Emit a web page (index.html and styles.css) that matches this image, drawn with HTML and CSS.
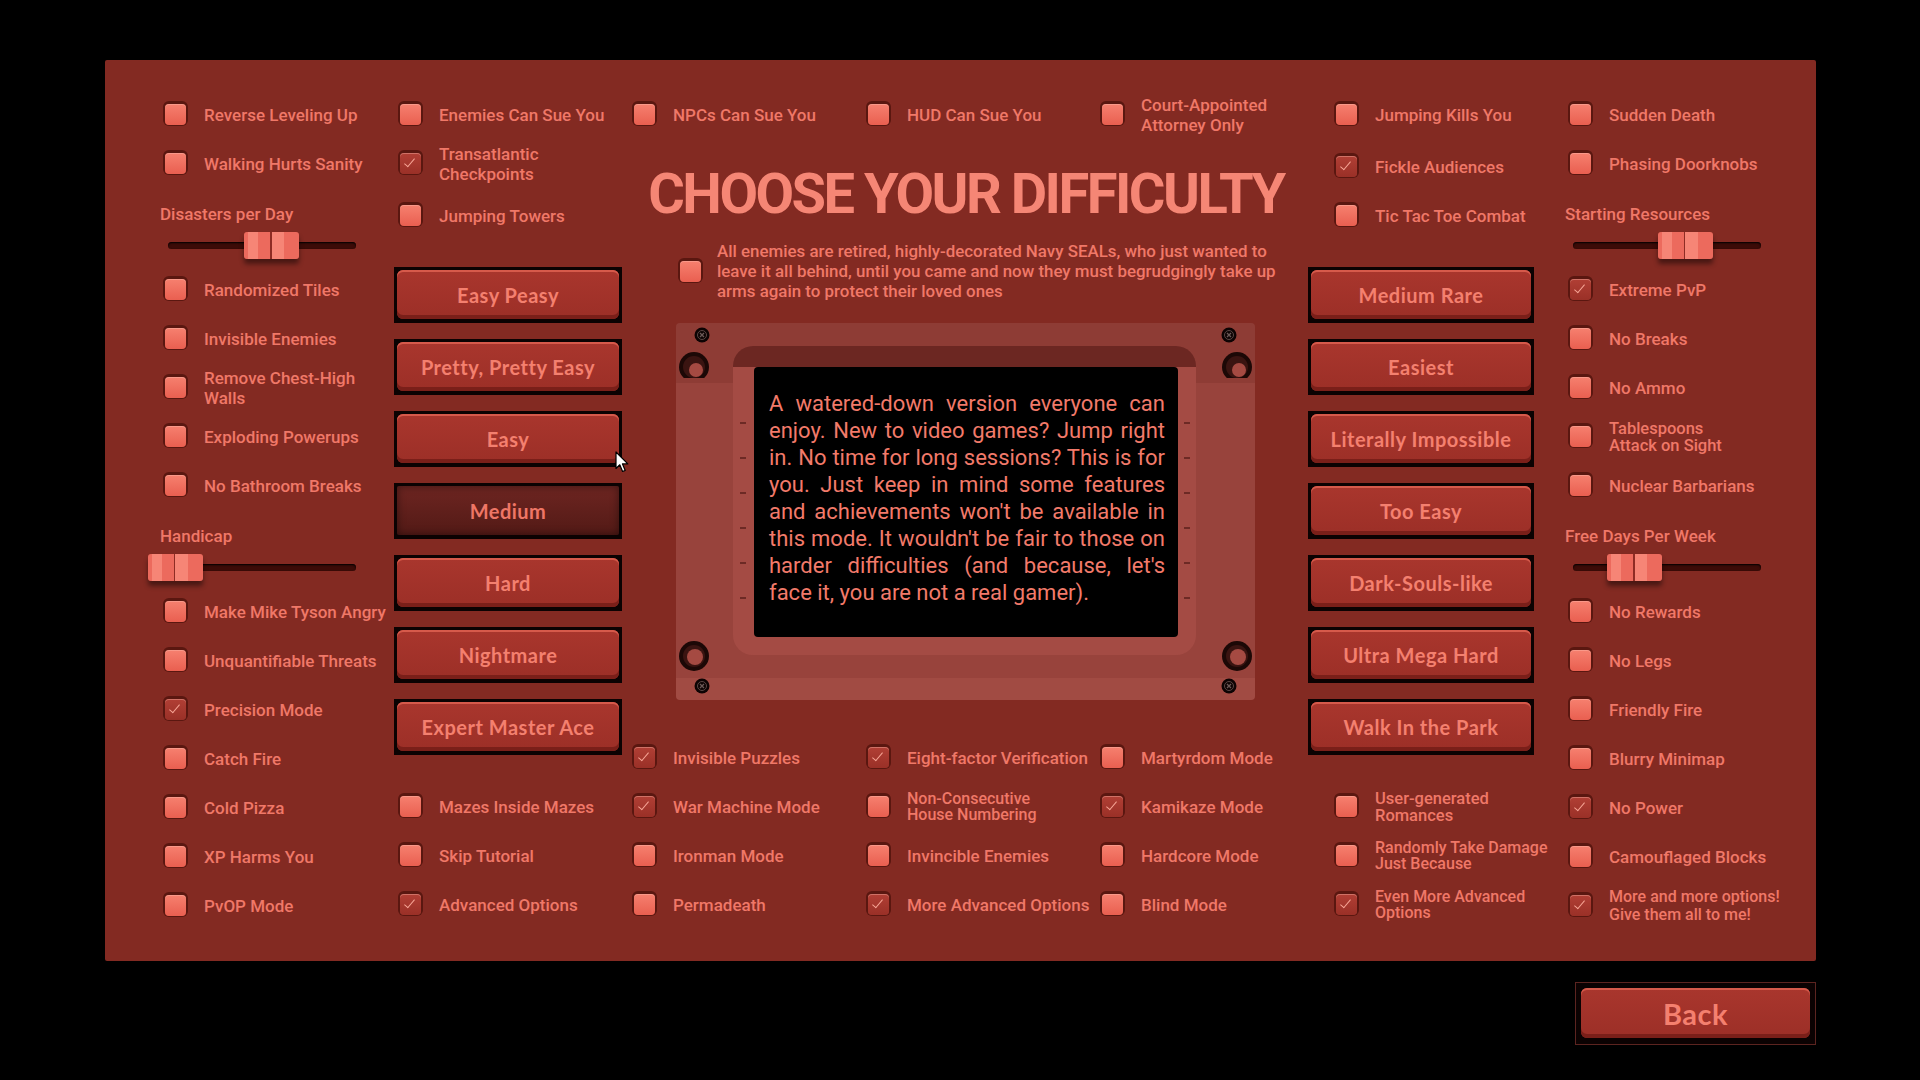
FILE: index.html
```html
<!DOCTYPE html>
<html lang="en">

<head>
    <meta charset="UTF-8">
    <title>Choose Your Difficulty</title>
    <link rel="stylesheet" href="styles.css">
</head>

<body>
    <div class="panel">
        <!-- left options -->
        <div class="col first">
            <div class="opt"><i class="box"></i><span>Reverse Leveling Up</span></div>
            <div class="opt"><i class="box"></i><span>Walking Hurts Sanity</span></div>
            <div class="slider">
                <span class="name">Disasters per Day</span>
                <div class="rail"><b class="knob" style="left: 76px"></b></div>
            </div>
            <div class="opt"><i class="box"></i><span>Randomized Tiles</span></div>
            <div class="opt"><i class="box"></i><span>Invisible Enemies</span></div>
            <div class="opt"><i class="box"></i><span>Remove Chest-High<br>Walls</span></div>
            <div class="opt"><i class="box"></i><span>Exploding Powerups</span></div>
            <div class="opt"><i class="box"></i><span>No Bathroom Breaks</span></div>
            <div class="slider">
                <span class="name">Handicap</span>
                <div class="rail"><b class="knob" style="left: -20px"></b></div>
            </div>
            <div class="opt"><i class="box"></i><span>Make Mike Tyson Angry</span></div>
            <div class="opt"><i class="box"></i><span>Unquantifiable Threats</span></div>
            <div class="opt"><i class="box on"></i><span>Precision Mode</span></div>
            <div class="opt"><i class="box"></i><span>Catch Fire</span></div>
            <div class="opt"><i class="box"></i><span>Cold Pizza</span></div>
            <div class="opt"><i class="box"></i><span>XP Harms You</span></div>
            <div class="opt"><i class="box"></i><span>PvOP Mode</span></div>
        </div>

        <div class="col">
            <div class="opt"><i class="box"></i><span>Enemies Can Sue You</span></div>
            <div class="opt"><i class="box on"></i><span>Transatlantic<br>Checkpoints</span></div>
            <div class="opt low"><i class="box"></i><span>Jumping Towers</span></div>
            <div class="stack left">
                <button class="diff"><span>Easy Peasy</span></button>
                <button class="diff"><span>Pretty, Pretty Easy</span></button>
                <button class="diff"><span>Easy</span></button>
                <button class="diff picked"><span>Medium</span></button>
                <button class="diff"><span>Hard</span></button>
                <button class="diff"><span>Nightmare</span></button>
                <button class="diff"><span>Expert Master Ace</span></button>
            </div>
            <div class="opt"><i class="box"></i><span>Mazes Inside Mazes</span></div>
            <div class="opt"><i class="box"></i><span>Skip Tutorial</span></div>
            <div class="opt"><i class="box on"></i><span>Advanced Options</span></div>
        </div>

        <!-- title, description and the info screen -->
        <div class="middle">
            <div class="trio">
                <div class="opt"><i class="box"></i><span>NPCs Can Sue You</span></div>
                <div class="opt"><i class="box"></i><span>HUD Can Sue You</span></div>
                <div class="opt"><i class="box"></i><span>Court-Appointed<br>Attorney Only</span></div>
            </div>

            <h1 class="title">CHOOSE YOUR DIFFICULTY</h1>

            <div class="brief">
                <i class="box"></i>
                <p>All enemies are retired, highly-decorated Navy SEALs, who just wanted to leave it all behind, until you came and now they must begrudgingly take up arms again to protect their loved ones</p>
            </div>

            <div class="monitor">
                <svg class="hole tl" width="32" height="27" viewBox="0 0 32 27"><circle cx="16" cy="16" r="15" fill="#1c0806"/><circle cx="16" cy="16" r="11" fill="#3a1411"/><circle cx="18" cy="19" r="7" fill="#a54a42"/></svg>
                <svg class="hole tr" width="32" height="27" viewBox="0 0 32 27"><circle cx="16" cy="16" r="15" fill="#1c0806"/><circle cx="16" cy="16" r="11" fill="#3a1411"/><circle cx="18" cy="19" r="7" fill="#a54a42"/></svg>
                <svg class="hole bl" width="32" height="32" viewBox="0 0 32 32"><circle cx="16" cy="16" r="15" fill="#1c0806"/><circle cx="16" cy="16" r="11" fill="#3a1411"/><circle cx="17" cy="17" r="8" fill="#a54a42"/></svg>
                <svg class="hole br" width="32" height="32" viewBox="0 0 32 32"><circle cx="16" cy="16" r="15" fill="#1c0806"/><circle cx="16" cy="16" r="11" fill="#3a1411"/><circle cx="17" cy="17" r="8" fill="#a54a42"/></svg>

                <svg class="screw tl" width="16" height="16" viewBox="0 0 16 16"><circle cx="8" cy="8" r="7.5" fill="#0d0303"/><circle cx="8" cy="8" r="4.5" fill="none" stroke="#5a4644" stroke-width="1"/><path d="M6 6 L10 10 M10 6 L6 10" stroke="#6c5a58" stroke-width="1.3"/></svg>
                <svg class="screw tr" width="16" height="16" viewBox="0 0 16 16"><circle cx="8" cy="8" r="7.5" fill="#0d0303"/><circle cx="8" cy="8" r="4.5" fill="none" stroke="#5a4644" stroke-width="1"/><path d="M6 6 L10 10 M10 6 L6 10" stroke="#6c5a58" stroke-width="1.3"/></svg>
                <svg class="screw bl" width="16" height="16" viewBox="0 0 16 16"><circle cx="8" cy="8" r="7.5" fill="#0d0303"/><circle cx="8" cy="8" r="4.5" fill="none" stroke="#5a4644" stroke-width="1"/><path d="M6 6 L10 10 M10 6 L6 10" stroke="#6c5a58" stroke-width="1.3"/></svg>
                <svg class="screw br" width="16" height="16" viewBox="0 0 16 16"><circle cx="8" cy="8" r="7.5" fill="#0d0303"/><circle cx="8" cy="8" r="4.5" fill="none" stroke="#5a4644" stroke-width="1"/><path d="M6 6 L10 10 M10 6 L6 10" stroke="#6c5a58" stroke-width="1.3"/></svg>

                <div class="ticks l"><i></i><i></i><i></i><i></i><i></i><i></i></div>
                <div class="ticks r"><i></i><i></i><i></i><i></i><i></i><i></i></div>

                <div class="bezel">
                    <div class="screen">
                        A watered-down version everyone can enjoy. New to video games? Jump right in. No time for long sessions? This is for you. Just keep in mind some features and achievements won't be available in this mode. It wouldn't be fair to those on harder difficulties (and because, let's face it, you are not a real gamer).
                    </div>
                </div>
            </div>

            <div class="grid">
                <div class="opt"><i class="box on"></i><span>Invisible Puzzles</span></div>
                <div class="opt"><i class="box on"></i><span>Eight-factor Verification</span></div>
                <div class="opt"><i class="box"></i><span>Martyrdom Mode</span></div>
                <div class="opt"><i class="box on"></i><span>War Machine Mode</span></div>
                <div class="opt small"><i class="box"></i><span>Non-Consecutive<br>House Numbering</span></div>
                <div class="opt"><i class="box on"></i><span>Kamikaze Mode</span></div>
                <div class="opt"><i class="box"></i><span>Ironman Mode</span></div>
                <div class="opt"><i class="box"></i><span>Invincible Enemies</span></div>
                <div class="opt"><i class="box"></i><span>Hardcore Mode</span></div>
                <div class="opt"><i class="box"></i><span>Permadeath</span></div>
                <div class="opt"><i class="box on"></i><span>More Advanced Options</span></div>
                <div class="opt"><i class="box"></i><span>Blind Mode</span></div>
            </div>
        </div>

        <!-- right options -->
        <div class="col">
            <div class="opt"><i class="box"></i><span>Jumping Kills You</span></div>
            <div class="opt low"><i class="box on"></i><span>Fickle Audiences</span></div>
            <div class="opt low"><i class="box"></i><span>Tic Tac Toe Combat</span></div>
            <div class="stack right">
                <button class="diff"><span>Medium Rare</span></button>
                <button class="diff"><span>Easiest</span></button>
                <button class="diff"><span>Literally Impossible</span></button>
                <button class="diff"><span>Too Easy</span></button>
                <button class="diff"><span>Dark-Souls-like</span></button>
                <button class="diff"><span>Ultra Mega Hard</span></button>
                <button class="diff"><span>Walk In the Park</span></button>
            </div>
            <div class="opt tight"><i class="box"></i><span>User-generated<br>Romances</span></div>
            <div class="opt small"><i class="box"></i><span>Randomly Take Damage<br>Just Because</span></div>
            <div class="opt small"><i class="box on"></i><span>Even More Advanced<br>Options</span></div>
        </div>

        <div class="col">
            <div class="opt"><i class="box"></i><span>Sudden Death</span></div>
            <div class="opt"><i class="box"></i><span>Phasing Doorknobs</span></div>
            <div class="slider">
                <span class="name">Starting Resources</span>
                <div class="rail"><b class="knob" style="left: 85px"></b></div>
            </div>
            <div class="opt"><i class="box on"></i><span>Extreme PvP</span></div>
            <div class="opt"><i class="box"></i><span>No Breaks</span></div>
            <div class="opt"><i class="box"></i><span>No Ammo</span></div>
            <div class="opt tight"><i class="box"></i><span>Tablespoons<br>Attack on Sight</span></div>
            <div class="opt"><i class="box"></i><span>Nuclear Barbarians</span></div>
            <div class="slider">
                <span class="name">Free Days Per Week</span>
                <div class="rail"><b class="knob" style="left: 34px"></b></div>
            </div>
            <div class="opt"><i class="box"></i><span>No Rewards</span></div>
            <div class="opt"><i class="box"></i><span>No Legs</span></div>
            <div class="opt"><i class="box"></i><span>Friendly Fire</span></div>
            <div class="opt"><i class="box"></i><span>Blurry Minimap</span></div>
            <div class="opt"><i class="box on"></i><span>No Power</span></div>
            <div class="opt"><i class="box"></i><span>Camouflaged Blocks</span></div>
            <div class="opt wide"><i class="box on"></i><span>More and more options!<br>Give them all to me!</span></div>
        </div>
    </div>

    <div class="footer">
        <button class="back"><span>Back</span></button>
    </div>

    <!-- mouse pointer -->
    <svg class="pointer" width="14" height="22" viewBox="0 0 14 22">
        <path d="M1 1 L1 17.5 L4.8 13.8 L7.6 20.5 L10.2 19.4 L7.5 12.9 L12.8 12.9 Z" fill="#fff" stroke="#000" stroke-width="1.2" stroke-linejoin="round"/>
    </svg>
</body>

</html>
```

FILE: styles.css
```css
html,
body {
    margin: 0;
    background: #000;
}

body {
    position: relative;
    width: 1920px;
    height: 1080px;
    overflow: hidden;
    font-family: Roboto, "Liberation Sans", sans-serif;
    color: #f07868;
}

.panel {
    display: flex;
    box-sizing: border-box;
    width: 1711px;
    height: 901px;
    margin: 60px 0 0 105px;
    padding: 30px 0 0 60px;
    background: #832a22;
    /* Deep brick red */
    border-radius: 2px;
}

.col {
    display: flex;
    flex-direction: column;
    flex: none;
    width: 234px;
}

.col.first {
    width: 235px;
}

/* Checkbox rows */
.opt {
    display: flex;
    align-items: center;
    flex: none;
    height: 49px;
}

.opt.low {
    margin-top: 3px;
    margin-bottom: -3px;
}

.opt span {
    font-size: 17px;
    font-weight: 500;
    line-height: 20px;
    white-space: nowrap;
}

.opt.small span {
    font-size: 16px;
    line-height: 16px;
}

.opt.tight span {
    font-size: 16.5px;
    line-height: 17px;
}

.opt.wide span {
    font-size: 16px;
    line-height: 18px;
}

.box {
    position: relative;
    flex: none;
    width: 21px;
    height: 21px;
    margin-right: 18px;
    border-radius: 4px;
    background: linear-gradient(#f6806f, #e95f50);
    box-shadow: 0 -1px 0 2px #5a1710, inset 0 1px 0 rgba(255, 190, 178, 0.4);
}

.box.on {
    background: linear-gradient(#b13f35, #9a3027);
}

.box.on::after {
    content: "";
    position: absolute;
    left: 7px;
    top: 3px;
    width: 4px;
    height: 10px;
    border-right: 1.5px solid #f8a596;
    border-bottom: 1.5px solid #f8a596;
    transform: rotate(40deg);
}

/* Sliders */
.slider {
    flex: none;
    height: 77px;
    margin-left: -5px;
}

.slider .name {
    display: block;
    padding-top: 16px;
    font-size: 17px;
    font-weight: 500;
    line-height: 20px;
}

.rail {
    position: relative;
    width: 188px;
    height: 7px;
    margin: 18px 0 0 8px;
    border-radius: 4px;
    background: #3c0b07;
    box-shadow: inset 0 1px 2px #000;
}

.knob {
    position: absolute;
    top: -10px;
    width: 55px;
    height: 27px;
    border-radius: 3px;
    background: linear-gradient(90deg, #ec6a5d 0 8%, #f68576 8% 26%, #ec6a5d 26% 47%, #8e2c24 47% 50%, #f68576 50% 72%, #ec6a5d 72%);
    box-shadow: 0 5px 5px rgba(0, 0, 0, 0.45);
}

/* Difficulty buttons */
.stack {
    display: flex;
    flex-direction: column;
    flex: none;
    gap: 16px;
    margin: 30px 0 27px -6px;
}

.stack.right {
    margin-left: -28px;
}

.diff,
.back {
    display: block;
    box-sizing: border-box;
    margin: 0;
    border: none;
    cursor: pointer;
    background: #0b0202;
}

.diff {
    width: 228px;
    height: 56px;
    padding: 3px 3px 4px;
}

.stack.right .diff {
    width: 226px;
}

.diff span,
.back span {
    display: flex;
    align-items: center;
    justify-content: center;
    height: 100%;
    border-radius: 6px;
    background: linear-gradient(#a9362d, #9c2f27);
    box-shadow: inset 0 2px 0 #d65a4b, inset 0 -4px 0 #7a1f19;
    font-family: Lato, "Open Sans", sans-serif;
    font-weight: 700;
    font-size: 20px;
    letter-spacing: 0.5px;
    color: #f4806f;
}

.diff.picked span {
    border-radius: 2px;
    background: linear-gradient(#6d2521, #531a16);
    box-shadow: inset 0 0 8px rgba(0, 0, 0, 0.45);
    color: #ee7666;
}

/* Center column */
.middle {
    display: flex;
    flex-direction: column;
    flex: none;
    width: 702px;
}

.middle > * {
    flex: none;
}

.trio,
.grid {
    display: grid;
    grid-template-columns: repeat(3, 234px);
}

.grid {
    margin-top: 33px;
}

.title {
    width: 664px;
    margin: 26px 0 0;
    font-size: 56px;
    font-weight: 700;
    line-height: 58px;
    letter-spacing: -2.5px;
    text-align: center;
    white-space: nowrap;
    color: #f58675;
}

.brief {
    display: flex;
    align-items: center;
    width: 620px;
    margin: 18px 0 0 46px;
}

.brief .box {
    margin-right: 16px;
}

.brief p {
    width: 580px;
    margin: 0;
    font-size: 16.9px;
    font-weight: 500;
    line-height: 20px;
}

.monitor {
    position: relative;
    box-sizing: border-box;
    width: 579px;
    height: 377px;
    margin: 22px 0 0 42px;
    padding: 23px 59px 45px 57px;
    border-radius: 4px;
    background: linear-gradient(#8e3c35 0 60px, #98433c 60px 355px, #a14b43 355px);
}

.bezel {
    box-sizing: border-box;
    height: 100%;
    padding: 21px 18px 18px 21px;
    border-radius: 20px;
    background: linear-gradient(#6c2722 0 21px, #a44b44 21px);
}

.screen {
    box-sizing: border-box;
    height: 100%;
    padding: 23px 13px 0 15px;
    border-radius: 4px;
    background: #000;
    font-size: 22px;
    line-height: 27px;
    text-align: justify;
    color: #f27a6a;
}

.screw,
.hole,
.ticks {
    position: absolute;
}

.screw.tl { left: 18px; top: 4px; }
.screw.tr { left: 545px; top: 4px; }
.screw.bl { left: 18px; top: 355px; }
.screw.br { left: 545px; top: 355px; }

.hole.tl { left: 2px; top: 28px; }
.hole.tr { left: 545px; top: 28px; }
.hole.bl { left: 2px; top: 317px; }
.hole.br { left: 545px; top: 317px; }

.ticks {
    top: 99px;
    display: flex;
    flex-direction: column;
    gap: 33px;
}

.ticks.l { left: 64px; }
.ticks.r { left: 508px; }

.ticks i {
    display: block;
    width: 6px;
    height: 2px;
    background: #6d2a25;
}

/* Back button */
.footer {
    display: flex;
    justify-content: flex-end;
    width: 1816px;
    margin-top: 21px;
}

.back {
    width: 241px;
    height: 63px;
    padding: 5px 5px 6px;
    border: 1px solid #5c2420;
}

.back span {
    font-size: 29px;
    letter-spacing: 0.5px;
}

.pointer {
    position: absolute;
    left: 615px;
    top: 451px;
}
```
